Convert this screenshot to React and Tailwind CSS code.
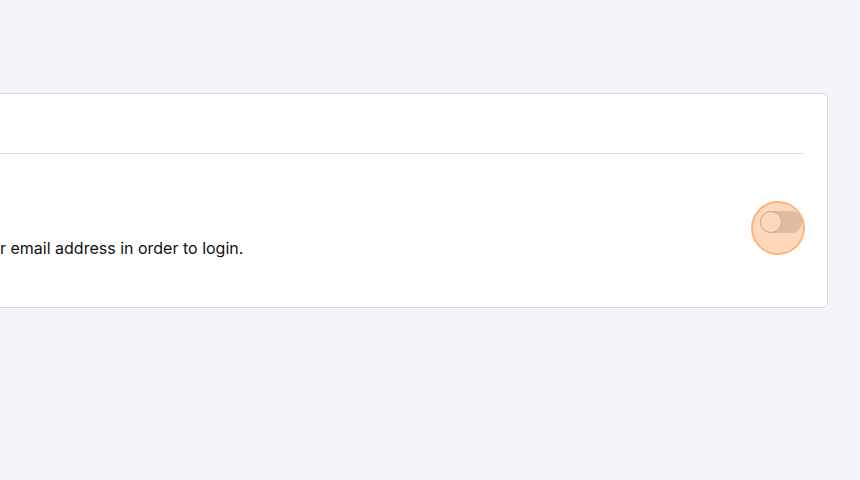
export default function App() {
  return (
    <div className="min-h-screen w-[860px] h-[480px] overflow-hidden bg-[#f4f4f8] pt-[93px]" style={{ fontFamily: "Inter, 'Noto Sans', sans-serif" }}>
      <div className="ml-[-206px] mr-[32px] rounded-md border border-[#d6d6dc] bg-white">
        <div className="mx-6 h-[60px] border-b border-[#dcdce0]" />
        <div className="flex items-center justify-between pl-6 pr-[22px] pt-[41px] pb-[47px]">
          <div className="flex flex-col">
            <div className="h-[28px] text-lg font-semibold leading-7 text-[#111]">Email verification</div>
            <div className="mt-[13px] text-base leading-6 text-[#111]">Users must confirm their email address in order to login.</div>
          </div>
          <div className="flex h-[54px] w-[54px] items-center justify-center rounded-full border-2 border-[#fdb47c] bg-[#fed8bb]">
            <div className="ml-[5px] mt-[-11px] flex h-[22px] w-[42px] items-center rounded-full bg-[#dfbba0]">
              <div className="h-[22px] w-[22px] rounded-full border border-[#cfa78a] bg-[#fed8bb]" />
            </div>
          </div>
        </div>
      </div>
    </div>
  );
}
